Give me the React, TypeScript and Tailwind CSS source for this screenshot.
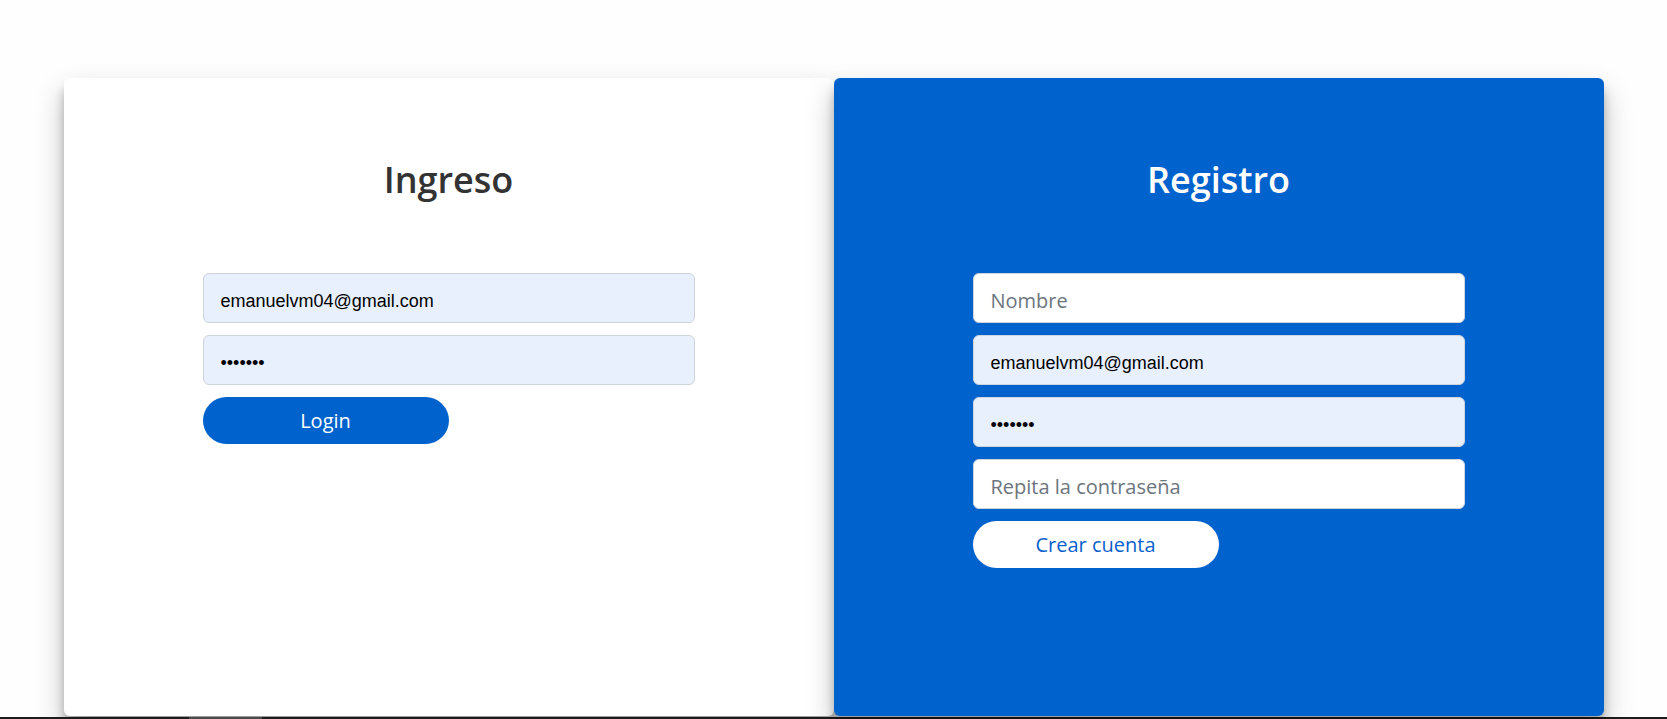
import type { FormEvent } from 'react';

const CARD_SHADOW = 'shadow-[0_14px_28px_rgba(0,0,0,0.25),0_10px_10px_rgba(0,0,0,0.22)]';
const INPUT_BASE =
  'block w-full h-[50px] rounded-[6px] border px-[17px] outline-none placeholder:text-[#6c757d]';
const FILLED = `${INPUT_BASE} pt-[6px] bg-[#e8f0fe] border-[#ced4da] text-black text-[18px] font-['Liberation_Sans',Arial,sans-serif]`;
const EMPTY = `${INPUT_BASE} pt-[4px] bg-white border-[#ced4da] text-[#495057] text-[20px] font-['Open_Sans','Noto_Sans',sans-serif]`;

export default function App() {
  function stop(e: FormEvent<HTMLFormElement>) {
    e.preventDefault();
  }

  return (
    <div className="flex h-[719px] w-full flex-col overflow-hidden bg-[#fefefe] font-['Open_Sans','Noto_Sans',sans-serif]">
      <div className="flex flex-1 justify-center pt-[78px]">
        <div className="flex h-[638px] w-[1540px]">
          {/* Login */}
          <div className={`flex h-full w-[770px] flex-col items-center rounded-[6px] bg-white pt-[80px] ${CARD_SHADOW}`}>
            <h1 className="text-[36px] font-semibold leading-[43px] text-[#333]">Ingreso</h1>
            <form onSubmit={stop} className="mt-[72px] flex w-[492px] flex-col gap-3">
              <input type="email" defaultValue="emanuelvm04@gmail.com" className={FILLED} />
              <input type="password" defaultValue="1234567" className={FILLED} />
              <button
                type="submit"
                className="h-[47px] w-[246px] rounded-full bg-[#0062cc] text-[20px] text-white"
              >
                Login
              </button>
            </form>
          </div>

          {/* Registro */}
          <div className={`relative z-10 flex h-full w-[770px] flex-col items-center rounded-[6px] bg-[#0062cc] pt-[80px] ${CARD_SHADOW}`}>
            <h1 className="text-[36px] font-semibold leading-[43px] text-white">Registro</h1>
            <form onSubmit={stop} className="mt-[72px] flex w-[492px] flex-col gap-3">
              <input type="text" placeholder="Nombre" className={EMPTY} />
              <input type="email" defaultValue="emanuelvm04@gmail.com" className={FILLED} />
              <input type="password" defaultValue="1234567" className={FILLED} />
              <input type="password" placeholder="Repita la contraseña" className={EMPTY} />
              <button
                type="submit"
                className="h-[47px] w-[246px] rounded-full bg-white text-[20px] text-[#0a5fcc]"
              >
                Crear cuenta
              </button>
            </form>
          </div>
        </div>
      </div>

      {/* bottom strip */}
      <div className="flex h-[2px] bg-[#1c1c1c]">
        <div className="ml-[189px] w-[73px] bg-[#4a4a4a]" />
      </div>
    </div>
  );
}
